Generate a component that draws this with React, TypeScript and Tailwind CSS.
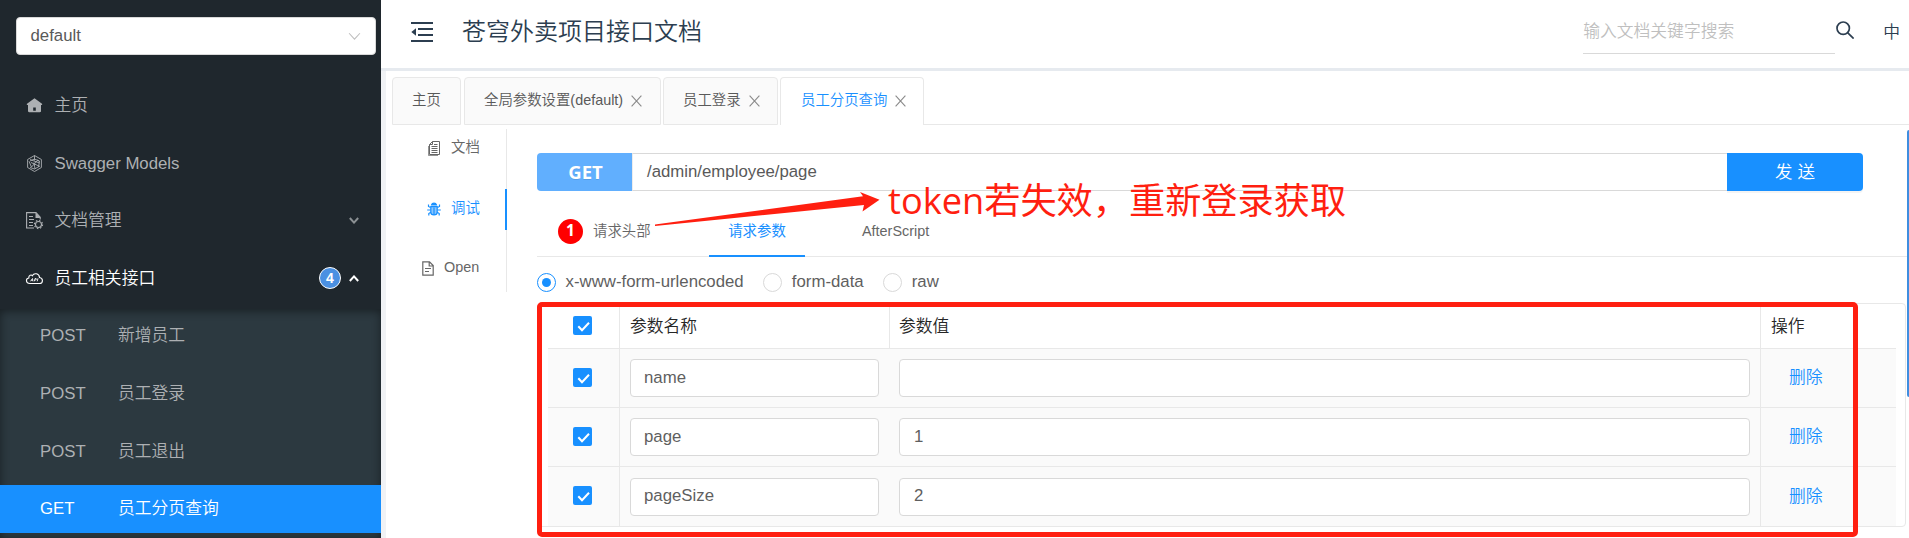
import React from "react";

const cjk = "font-['Liberation_Sans','Noto_Sans_CJK_SC',sans-serif]";

function Chevron({ className }: { className: string }) {
  return (
    <svg className={className} viewBox="0 0 12 8" fill="none" stroke="currentColor">
      <path d="M1 1l5 5.5L11 1" />
    </svg>
  );
}

function HomeIcon() {
  return (
    <svg className="h-[17px] w-[17px]" viewBox="0 0 17 17" fill="currentColor">
      <path fillRule="evenodd" d="M8.500 1.200L1 6.800c-.5.500-.2 1.200.3 1.200H2v6c0 .8.400 1.200 1.200 1.200h10.600c.8 0 1.200-.4 1.200-1.200V8h.7c.5 0 .8-.7.300-1.200zM7.200 10.500h2.600v3.300H7.200z" />
    </svg>
  );
}

function ModelIcon() {
  return (
    <svg className="h-[17px] w-[17px]" viewBox="0 0 17 17" fill="none" stroke="currentColor" strokeWidth=".9">
      <path d="M8.500.5l6.900 4v8l-6.900 4-6.900-4v-8zM8.500.5v5M4 4.500L13.500 8M3 6.200l2.500 6M5.500 12l6-6.500M11 5l2.500 1-1 6M14 11.500L5 7.500M4 6l4.500-2 4.500 2M4 12.500l4.500 1.500 4.500-2.500M8 7.500l1 6.500" />
    </svg>
  );
}

function DocGearIcon() {
  return (
    <svg className="h-[17px] w-[17px] overflow-visible" viewBox="0 0 17 17" fill="none" stroke="currentColor" strokeWidth="1.100">
      <path d="M8 16H.6V.6H10l4.200 4.700v2.200M3 4.500h4M3 7.500h5M3 10.500h4M3 13.500h4" />
      <path d="M9.500.6l5 5.400h-5z" fill="currentColor" stroke="none" />
      <circle cx="12.500" cy="12.500" r="3" />
      <circle cx="12.500" cy="12.500" r="4.100" strokeDasharray="1.500 1.720" />
    </svg>
  );
}

function CloudIcon() {
  return (
    <svg className="h-[17px] w-[17px] overflow-visible" viewBox="0 0 17 17" fill="none" stroke="currentColor" strokeWidth="1.100">
      <path d="M4 13.500C-.5 13.500-.5 8.500 2.800 8 2.500 5 5.500 4.500 6.300 5.700 8 2.500 13.200 3.300 13.500 7.500c4 .5 3.800 6 0 6z" />
      <path d="M4.500 11.300L6.500 8.500l.4 2.800M5.300 10.300h1.500M8.300 11.300l.8-2.800c2.200-.3 1.800 1.600-.3 1.500M12 8.300l-.8 3" strokeWidth=".9" />
    </svg>
  );
}

function CopyDocIcon() {
  return (
    <svg className="h-[15px] w-[13px]" viewBox="0 0 13 15" fill="none" stroke="currentColor">
      <path d="M4.500.5h7v13h-10v-10zM4.500.5v3h-3M6 3.500h3.500M3.500 5.500h6M3.500 7.500h6M3.500 9.500h6M3.500 11.500h6" />
      <path d="M.5 5v9.500H10" strokeWidth=".7" />
    </svg>
  );
}

function BugIcon() {
  return (
    <svg className="h-[14px] w-[14px]" viewBox="0 0 14 14" fill="none" stroke="currentColor" strokeWidth="1.200">
      <path d="M4.500 3a2.600 2.600 0 0 1 5 0z" fill="currentColor" />
      <path d="M3.800 4.600h6.400v5.600c0 3.600-6.400 3.600-6.400 0z" fill="currentColor" fillOpacity=".5" />
      <path d="M7 5.500v7M3.500 5.500L1.500 4.500V2.500M10.500 5.500l2-1V2.500M3.500 8H.2M10.500 8h3.300M3.800 10.300L1.800 11.500V13.500M10.200 10.300l2 1.200V13.500" />
    </svg>
  );
}

function FileIcon() {
  return (
    <svg className="h-[15px] w-[12px]" viewBox="0 0 12 15" fill="none" stroke="currentColor" strokeWidth="1.200">
      <path d="M.8.8H7.500l3.700 3.700v9.700H.8zM7.200.8V5h4M3 7.500h6M3 10.500h4" />
    </svg>
  );
}

function Close() {
  return (
    <svg className="h-[12px] w-[11px] text-[#8a8a8a]" viewBox="0 0 11 12" fill="none" stroke="currentColor" strokeWidth="1.100">
      <path d="M.6.6l9.800 10.800M10.400.6L.6 11.400" />
    </svg>
  );
}

function Check() {
  return (
    <span className="mr-[2px] mb-[2px] flex h-[19px] w-[19px] items-center justify-center rounded-[2px] bg-[#1890ff]">
      <svg className="h-[19px] w-[19px]" viewBox="0 0 19 19" fill="none" stroke="#fff" strokeWidth="2">
        <path d="M5.300 10.300l3.700 4 7-7.500" />
      </svg>
    </span>
  );
}

function Radio({ label, checked, className = "" }: { label: string; checked?: boolean; className?: string }) {
  return (
    <label className={`flex items-center ${className}`}>
      <span className={`flex h-[19px] w-[19px] items-center justify-center rounded-full border bg-white ${checked ? "border-[#1890ff]" : "border-[#d9d9d9]"}`}>
        {checked && <span className="h-[9px] w-[9px] rounded-full bg-[#1890ff]" />}
      </span>
      <span className="ml-[9.600px]">{label}</span>
    </label>
  );
}

const menu = [
  { icon: <HomeIcon />, label: "主页" },
  { icon: <ModelIcon />, label: "Swagger Models" },
  { icon: <DocGearIcon />, label: "文档管理", arrow: true },
];

const apis = [
  ["POST", "新增员工"],
  ["POST", "员工登录"],
  ["POST", "员工退出"],
];

function Sidebar() {
  return (
    <aside className="flex h-full w-[381px] shrink-0 flex-col bg-[#1f272d] text-[#adb0b3]">
      <div className="mt-[17px] ml-4 flex h-[38px] w-[360px] shrink-0 items-center justify-between rounded-[4px] border border-[#d9d9d9] bg-white pr-[14px] pl-[13.500px] text-[#595959]">
        <span className="pb-[1px]">default</span>
        <Chevron className="h-[9px] w-[13px] text-[#bfbfbf]" />
      </div>
      <nav className="mt-[22px] flex flex-col">
        {menu.map((m) => (
          <div key={m.label} className="flex h-[57.6px] items-center pr-[22px] pl-[26px]">
            {m.icon}
            <span className="ml-[11.500px] flex-1">{m.label}</span>
            {m.arrow && <Chevron className="h-[7px] w-[10px] stroke-[2.400] text-[#8b9093]" />}
          </div>
        ))}
        <div className="flex h-[59px] items-center pr-[22px] pb-[2px] pl-[26px] text-white">
          <CloudIcon />
          <span className="ml-[11.500px] flex-1">员工相关接口</span>
          <span className="mr-[8px] flex h-[22px] w-[22px] items-center justify-center rounded-full border border-white bg-[#4a90e2] text-[14px] leading-none font-bold">4</span>
          <Chevron className="h-[7px] w-[10px] rotate-180 stroke-[2.400]" />
        </div>
      </nav>
      <div className="flex flex-1 flex-col bg-[#2c3940] shadow-[inset_0_2px_10px_rgba(0,0,0,0.45)]">
        {apis.map(([method, name]) => (
          <div key={name} className="flex h-[57.800px] shrink-0 items-center pb-[4px] pl-10">
            <span className="w-[78px]">{method}</span>
            <span>{name}</span>
          </div>
        ))}
        <div className="mt-[3px] flex h-12 shrink-0 items-center bg-[#1890ff] pb-[1px] pl-10 text-white">
          <span className="w-[78px]">GET</span>
          <span>员工分页查询</span>
        </div>
      </div>
    </aside>
  );
}

function Header() {
  return (
    <header className="flex h-[68px] shrink-0 items-center bg-white text-[#2c3e50]">
      <svg className="mt-[-4px] ml-[30px] h-[20px] w-[22px]" viewBox="0 0 22 20" fill="none" stroke="currentColor" strokeWidth="1.800">
        <path d="M0 1h22M7 7h15M7 13h15M0 19h22" />
        <path d="M.3 10l4.700-3.800v7.600z" fill="currentColor" stroke="none" />
      </svg>
      <h1 className="ml-[29px] w-[245px] pb-[4px] text-[24px] [font-weight:350] whitespace-nowrap">苍穹外卖项目接口文档</h1>
      <div className="ml-auto flex h-[39px] w-[252px] items-center border-b border-[#d9d9d9] pb-[3px] text-[#bfbfbf]">输入文档关键字搜索</div>
      <svg className="mt-[-9px] ml-[1px] h-[18px] w-[18px]" viewBox="0 0 18 18" fill="none" stroke="currentColor" strokeWidth="1.700">
        <circle cx="7.200" cy="7.200" r="6.200" />
        <path d="M11.600 11.600l6 6" />
      </svg>
      <span className="mr-[9px] ml-[29px] pb-[3px]">中</span>
    </header>
  );
}

const tabs = [
  { label: "主页", cls: "w-[69px] mr-[3px]", closable: false },
  { label: "全局参数设置(default)", cls: "w-[197px] mr-[2px]", closable: true },
  { label: "员工登录", cls: "w-[115px] mr-[2px]", closable: true },
];

function Tabs() {
  return (
    <div className="flex h-[48px] shrink-0 items-stretch pl-[6px] text-[14.400px] text-[#595959]">
      {tabs.map((t) => (
        <div key={t.label} className={`flex items-center rounded-t-[4px] border border-[#e8e8e8] bg-[#fafafa] pb-[1px] pl-[19px] whitespace-nowrap ${t.cls}`}>
          {t.label}
          {t.closable && <span className="ml-[8px]"><Close /></span>}
        </div>
      ))}
      <div className="flex w-[144px] items-center rounded-t-[4px] border border-b-0 border-[#e8e8e8] bg-white pb-[2px] pl-[20px] whitespace-nowrap text-[#1890ff]">
        员工分页查询<span className="ml-[8px]"><Close /></span>
      </div>
      <div className="flex-1 border-b border-[#e8e8e8]" />
    </div>
  );
}

function DebugNav() {
  return (
    <div className="mt-[4px] flex h-[163px] w-[114px] shrink-0 flex-col border-r border-[#e8e8e8] text-[14.400px] text-[#666]">
      <div className="flex h-[38px] items-center pl-[35px]"><CopyDocIcon /><span className="ml-[10px]">文档</span></div>
      <div className="mt-[22px] mr-[-1px] flex h-[41px] items-center border-r-2 border-[#1890ff] pb-[2px] pl-[34px] text-[#1890ff]"><BugIcon /><span className="ml-[10px]">调试</span></div>
      <div className="mt-[19px] flex h-[40px] items-center pb-[2px] pl-[29px]"><FileIcon /><span className="ml-[10px]">Open</span></div>
    </div>
  );
}

const rows = [
  ["name", ""],
  ["page", "1"],
  ["pageSize", "2"],
];

function ParamTable() {
  return (
    <div className="mt-[12px] mr-[1px] rounded-[4px] border border-[#e8e8e8] pr-[9px] pl-[10px]">
      <div className="flex h-[45px] items-stretch border-b border-[#e8e8e8] text-[#262626]">
        <div className="flex w-[72px] items-center justify-center border-r border-[#e8e8e8]"><Check /></div>
        <div className="flex w-[270px] items-center border-r border-[#e8e8e8] pt-[2px] pl-[10px]">参数名称</div>
        <div className="flex flex-1 items-center border-r border-[#e8e8e8] pt-[2px] pl-[9px]">参数值</div>
        <div className="flex w-[135px] items-center pt-[2px] pl-[10px]">操作</div>
      </div>
      {rows.map(([name, value]) => (
        <div key={name} className="flex h-[59px] items-center border-b border-[#e8e8e8] bg-[#fafafa] last:border-b-0">
          <div className="flex h-full w-[72px] items-center justify-center border-r border-[#e8e8e8]"><Check /></div>
          <div className="flex w-[270px] pl-[10px]">
            <div className="flex h-[38px] w-[249px] items-center rounded-[4px] border border-[#d9d9d9] bg-white pb-[1px] pl-[13px]">{name}</div>
          </div>
          <div className="flex h-full flex-1 items-center border-r border-[#e8e8e8] pr-[10px] pl-[9px]">
            <div className="flex h-[38px] flex-1 items-center rounded-[4px] border border-[#d9d9d9] bg-white pb-[1px] pl-[14px]">{value}</div>
          </div>
          <div className="w-[135px] pl-[28px] text-[#1890ff]">删除</div>
        </div>
      ))}
    </div>
  );
}

function Workspace() {
  return (
    <section className="ml-[30px] flex min-w-0 flex-1 flex-col">
      <div className="mt-[28px] mr-[44px] flex h-[38px] shrink-0 items-stretch">
        <div className="flex w-[95px] shrink-0 items-center justify-center rounded-l-[4px] bg-[#61affe] pl-[2px] font-['Open_Sans',sans-serif] text-[18.500px] font-bold text-white [text-shadow:0_1px_0_rgba(0,0,0,0.1)]">GET</div>
        <div className="flex flex-1 items-center border-t border-b border-l border-[#d9d9d9] border-l-[#ececec] pb-[1px] pl-[14px] text-[#595959]">/admin/employee/page</div>
        <div className="flex w-[136px] items-center justify-center rounded-r-[4px] bg-[#1890ff] text-[17.500px] text-white shadow-[0_2px_0_rgba(0,0,0,0.045)]">发 送</div>
      </div>
      <div className="flex h-[66px] shrink-0 items-stretch border-b border-[#e8e8e8] text-[14.400px] text-[#666]">
        <div className="flex w-[172px] items-center pt-[15px] pl-[21px]">
          <span className="mr-[10px] flex h-[25px] w-[25px] items-center justify-center rounded-full bg-[#f00] font-['Open_Sans',sans-serif] text-[15.500px] font-bold text-white">1</span>
          <span className="pt-[1px]">请求头部</span>
        </div>
        <div className="mb-[-1px] flex w-[96px] items-center justify-center border-b-2 border-[#1890ff] pt-[18px] font-normal text-[#1890ff]">请求参数</div>
        <div className="flex items-center pt-[16px] pl-[57px]">AfterScript</div>
      </div>
      <div className="mt-[16px] flex h-[18px] shrink-0 items-center">
        <Radio label="x-www-form-urlencoded" checked />
        <Radio label="form-data" className="ml-[19.500px]" />
        <Radio label="raw" className="ml-[19.500px]" />
      </div>
      <ParamTable />
    </section>
  );
}

export default function App() {
  return (
    <div className={`relative flex h-[538px] w-[1909px] overflow-hidden bg-white text-[16.800px] leading-[1.500] [font-weight:350] ${cjk}`}>
      <Sidebar />
      <main className="flex min-w-0 flex-1 flex-col">
        <Header />
        <div className="h-[3px] shrink-0 bg-[#e6eaef]" />
        <div className="flex min-h-0 flex-1 flex-col border-l-[5px] border-[#f0f2f5]">
          <div className="h-[6px] shrink-0" />
          <Tabs />
          <div className="flex min-h-0 flex-1 pl-[7px] text-[#5f5f5f]">
            <DebugNav />
            <Workspace />
            <div className="mt-[5px] h-[267px] w-[2px] shrink-0 rounded-l bg-[#3f8ee0]" />
          </div>
        </div>
      </main>
      <div className="pointer-events-none absolute top-[302px] left-[537px] h-[235px] w-[1321px] rounded-[5px] border-[5px] border-[#ff1f10]" />
      <svg className="pointer-events-none absolute top-[185px] left-[650px] h-[45px] w-[235px]" viewBox="650 185 235 45" fill="#ff1f10">
        <path d="M655 224.500L863 196.200 860 192 879.500 199.800 862.500 211.500 864 205 655 226z" />
      </svg>
      <div className="pointer-events-none absolute top-[174px] left-[888px] font-['Open_Sans','Noto_Sans_CJK_SC',sans-serif] text-[36.200px] leading-[52px] font-normal whitespace-nowrap text-[#ff1f10]">token若失效，重新登录获取</div>
    </div>
  );
}
